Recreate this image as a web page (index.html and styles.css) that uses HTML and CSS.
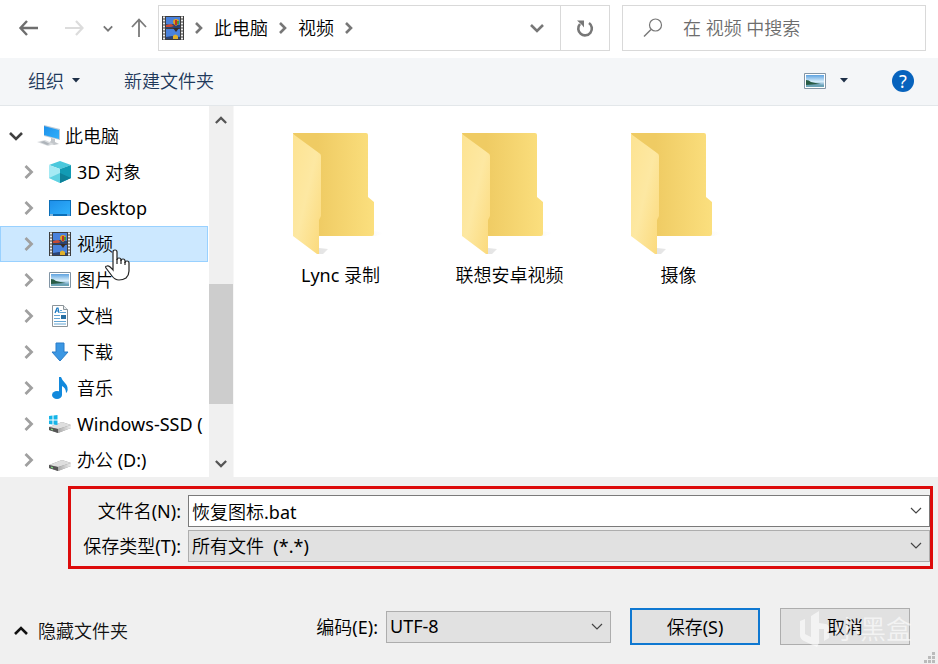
FILE: index.html
```html
<!DOCTYPE html>
<html lang="zh-CN">
<head>
  <meta charset="UTF-8" />
  <meta name="viewport" content="width=device-width, initial-scale=1" />
  <title>另存为</title>
  <link rel="stylesheet" href="styles.css">
</head>
<body>

  <!-- shared icons -->
  <svg class="sprite" aria-hidden="true">
    <defs>
      <linearGradient id="gBack" x1="0" x2="1"><stop offset="0.3" stop-color="#efcb63"/><stop offset="1" stop-color="#fbdf7e"/></linearGradient>
      <linearGradient id="gFront" x1="0" y1="0" x2="1" y2="1"><stop offset="0" stop-color="#fde392"/><stop offset="0.5" stop-color="#fde8a2"/><stop offset="1" stop-color="#fbd97a"/></linearGradient>
      <linearGradient id="gShade" x1="0" x2="1"><stop offset="0" stop-color="#bbb"/><stop offset="1" stop-color="#fff"/></linearGradient>
      <linearGradient id="gSky" x1="0" y1="0" x2="0" y2="1"><stop offset="0" stop-color="#5fa3e0"/><stop offset="0.55" stop-color="#d8eefa"/><stop offset="1" stop-color="#3b7fa8"/></linearGradient>
      <linearGradient id="gScreen" x1="0" y1="0" x2="1" y2="1"><stop offset="0" stop-color="#1e90ea"/><stop offset="1" stop-color="#2fb0fb"/></linearGradient>
      <linearGradient id="gDisk" x1="0" x2="1"><stop offset="0" stop-color="#a9a9a9"/><stop offset="1" stop-color="#ececec"/></linearGradient>
    </defs>
    <symbol id="chevron-right" viewBox="0 0 10 12"><path d="M2 1l5 5-5 5" fill="none" stroke="currentColor" stroke-width="2.6"/></symbol>
    <symbol id="chevron-item" viewBox="0 0 10 14"><path d="M1.500 1l6 6-6 6" fill="none" stroke="currentColor" stroke-width="2.8"/></symbol>
    <symbol id="chevron-down" viewBox="0 0 14 10"><path d="M1 2l6 6 6-6" fill="none" stroke="currentColor" stroke-width="2.6"/></symbol>
    <symbol id="chevron-up" viewBox="0 0 14 10"><path d="M1 8l6-6 6 6" fill="none" stroke="currentColor" stroke-width="2.6"/></symbol>
    <symbol id="thin-down" viewBox="0 0 12 8"><path d="M1 1l5 5 5-5" fill="none" stroke="#444" stroke-width="1.2"/></symbol>
    <symbol id="triangle" viewBox="0 0 8 5"><path d="M0 0h8L4 4.500z" fill="#1d2f47"/></symbol>
    <symbol id="film" viewBox="0 0 22 24">
      <path d="M0 0h22v24H0z" fill="#3d3d3d"/>
      <path d="M4 1h14v10H4zM4 13h14v10H4z" fill="#4a82dc"/>
      <path d="M4 8l4 1 3-1 7 1v3H4zM4 21l6-1 8 1v2H4z" fill="#2b4374"/>
      <path d="M1 1.500h2M1 4.500h2M1 7.500h2M1 10.500h2M1 13.500h2M1 16.500h2M1 19.500h2M1 22.500h2M19 1.500h2M19 4.500h2M19 7.500h2M19 10.500h2M19 13.500h2M19 16.500h2M19 19.500h2M19 22.500h2" stroke="#eee" stroke-width="1.800"/>
      <path d="M11 6q0-3 3-3t3 3q0 2-3 4-3-2-3-4z" fill="#e2a31d"/>
      <path d="M13 4h2v5h-2z" fill="#c03325"/>
      <path d="M15 5h2v3h-2z" fill="#4d9a31"/>
      <path d="M4 9l5-1 3 2-3 1H4z" fill="#c94b35"/>
      <path d="M11 12h6l-3 4z" fill="#3a2c24"/>
      <path d="M11 20q2-3 5 0v3h-5z" fill="#e0b02b"/>
    </symbol>
    <symbol id="pc" viewBox="0 0 24 22">
      <path d="M7 0l16 4v11L7 11z" fill="#b9cad8"/>
      <path d="M7 1l15 4v9L7 10z" fill="url(#gScreen)"/>
      <path d="M14 13l4 1v3l4 2-5 1-6-2 3-2z" fill="#c2c6ca"/>
      <path d="M0 17l8-2 9 4-6 2z" fill="#d8dbde"/>
      <path d="M3 17l4-1 6 3-3 1z" fill="#aeb4ba"/>
    </symbol>
    <symbol id="cube" viewBox="0 0 22 22">
      <path d="M11 0l11 4-11 4L0 4z" fill="#4ac8dc"/>
      <path d="M0 4l11 4v14L0 17z" fill="#a5eaf4"/>
      <path d="M11 8l11-4v13l-11 5z" fill="#129bb4"/>
      <path d="M0 17l11-5v10z" fill="#61d2e2"/>
      <path d="M11 12l11 5-11 5z" fill="#0d8199"/>
    </symbol>
    <symbol id="desktop" viewBox="0 0 22 16">
      <path d="M0 0h22v16H0z" fill="#0b6fb8"/>
      <path d="M1 1h20v13H1z" fill="url(#gScreen)"/>
      <path d="M1 15h3" stroke="#fff"/><path d="M18 15h3" stroke="#9cf"/>
    </symbol>
    <symbol id="picture" viewBox="0 0 22 16">
      <path d="M0.500 0.500h21v15h-21z" fill="#fff" stroke="#8295a5"/>
      <path d="M2 2h18v12H2z" fill="url(#gSky)"/>
      <path d="M2 7q3 0 5 2 4 1 10 2l-15 1z" fill="#285c45"/>
      <path d="M2 12h18v2H2z" fill="#6aa3b5"/>
    </symbol>
    <symbol id="document" viewBox="0 0 18 22">
      <path d="M1.500 0.500h11l4 4v17h-15z" fill="#fff" stroke="#8c9499"/>
      <path d="M12.500 0.500v4h4" fill="#e7ecef" stroke="#8c9499"/>
      <path d="M4 8l2-5h1l1 5M5 6h3" fill="none" stroke="#1676bf" stroke-width="1.200"/>
      <path d="M9 5.500h2M9 7.500h6M3 10.500h6M3 13.500h6M3 16.500h12M3 19h12" stroke="#65a6d4" stroke-width="1.200"/>
      <path d="M10 10h5v4h-5z" fill="#276fa3"/>
    </symbol>
    <symbol id="download" viewBox="0 0 18 20"><path d="M5 1h8v9h4l-8 9-8-9h4z" fill="#3b97e3" stroke="#2a7dc9"/></symbol>
    <symbol id="music" viewBox="0 0 16 22">
      <ellipse cx="5" cy="18" rx="5" ry="4" fill="#1289dc"/>
      <path d="M7 0h2q1 3 4 6 4 4 2 9l-1 1q0-5-4-7v9H7z" fill="#1289dc"/>
    </symbol>
    <symbol id="drive" viewBox="0 0 22 12">
      <path d="M0 6l13-5 9 3v3L9 12 0 9z" fill="#8d8d8d"/>
      <path d="M0 6l13-5 9 3L9 8z" fill="#dedede"/>
      <path d="M0 6l9 2v4L0 9z" fill="#555"/>
      <path d="M9 8l13-4v3L9 12z" fill="url(#gDisk)"/>
      <path d="M2 8l2 1" stroke="#8f8"/>
    </symbol>
    <symbol id="windrive" viewBox="0 0 22 18">
      <use href="#drive" x="0" y="6" width="22" height="12"/>
      <path d="M0 1l3.500-0.500v4H0zM4.500 0.400l4-0.400v4.500h-4zM0 5.500h3.500v4L0 9zM4.500 5.500h4V10l-4-0.500z" fill="#15b4e8"/>
    </symbol>
    <symbol id="folder" viewBox="0 0 96 124">
      <path d="M80 103V98l11 2-8 3zM26 121v-6l9 1-5 5z" fill="url(#gShade)" opacity="0.4"/>
      <path d="M0 0h73q2 0 2 2v62l6 5v32q0 2-2 2H20z" fill="url(#gBack)"/>
      <path d="M0 1l26 19q2 1 2 3v60l-2 4v34h-2L0 103z" fill="url(#gFront)"/>
    </symbol>
  </svg>

  <div class="dialog">
    <header class="nav">
      <button class="icon-btn back" aria-label="后退"><svg width="20" height="16" viewBox="0 0 20 16"><path d="M20 8H3M9 1L2.500 8 9 15" fill="none" stroke="#6e6e6e" stroke-width="2.400"/></svg></button>
      <button class="icon-btn forward" aria-label="前进"><svg width="20" height="16" viewBox="0 0 20 16"><path d="M1 8h17M12 1l6.500 7-6.500 7" fill="none" stroke="#dcdcdc" stroke-width="2.200"/></svg></button>
      <button class="icon-btn recent" aria-label="最近浏览的位置"><svg width="10" height="7"><use href="#chevron-down"/></svg></button>
      <button class="icon-btn up" aria-label="上移"><svg width="16" height="20" viewBox="0 0 16 20"><path d="M8 19V2M1 9l7-7.500L15 9" fill="none" stroke="#7a7a7a" stroke-width="1.800"/></svg></button>

      <div class="address">
        <svg width="22" height="24"><use href="#film"/></svg>
        <svg class="sep" width="10" height="12"><use href="#chevron-right"/></svg>
        <a href="#">此电脑</a>
        <svg class="sep" width="10" height="12"><use href="#chevron-right"/></svg>
        <a href="#">视频</a>
        <svg class="sep" width="10" height="12"><use href="#chevron-right"/></svg>
        <button class="icon-btn history" aria-label="以前的位置"><svg width="14" height="10"><use href="#chevron-down"/></svg></button>
        <button class="icon-btn refresh" aria-label="刷新"><svg width="18" height="18" viewBox="0 0 18 18"><path d="M13 4A6.800 6.800 0 1 1 4 5" fill="none" stroke="#777" stroke-width="2.600"/><path d="M1 1.500h7v7L6 6z" fill="#777"/></svg></button>
      </div>

      <label class="search">
        <svg width="20" height="20" viewBox="0 0 20 20"><circle cx="12.500" cy="7" r="6" fill="none" stroke="#777" stroke-width="1.200"/><path d="M8 11.500L1 18.500" stroke="#777" stroke-width="1.400"/></svg>
        <input type="text" placeholder="在 视频 中搜索" aria-label="搜索">
      </label>
    </header>

    <div class="toolbar">
      <button class="tool">组织 <svg width="8" height="5"><use href="#triangle"/></svg></button>
      <button class="tool">新建文件夹</button>
      <button class="tool view" aria-label="更改视图"><svg width="22" height="16"><use href="#picture"/></svg><svg width="8" height="5"><use href="#triangle"/></svg></button>
      <button class="help" aria-label="帮助">?</button>
    </div>

    <main class="main">
      <nav class="tree">
        <ul>
          <li class="root"><svg class="arrow" width="14" height="10"><use href="#chevron-down"/></svg><svg class="ico" width="24" height="22"><use href="#pc"/></svg><a href="#">此电脑</a></li>
          <li><svg class="arrow" width="10" height="14"><use href="#chevron-item"/></svg><svg class="ico" width="22" height="22"><use href="#cube"/></svg><a href="#">3D 对象</a></li>
          <li><svg class="arrow" width="10" height="14"><use href="#chevron-item"/></svg><svg class="ico" width="22" height="16"><use href="#desktop"/></svg><a href="#">Desktop</a></li>
          <li class="selected">
            <svg class="arrow" width="10" height="14"><use href="#chevron-item"/></svg><svg class="ico" width="22" height="24"><use href="#film"/></svg><a href="#">视频</a>
            <svg class="cursor" width="26" height="32" viewBox="0 0 26 32"><path d="M8 19V3q0-2 2-2t2 2v8q0-2 2-2t2 2v1q0-2 2-2t2 2v2q0-2 2-2t2 2v8q0 4-3 7-3 2-7 2-4 0-7-4L1 19q-1-2 1-2 2-1 6 4z" fill="#fff" stroke="#222" stroke-width="1.200"/><path d="M12 10v5M16 11v4M20 13v3" stroke="#222" stroke-width="1.200"/></svg>
          </li>
          <li><svg class="arrow" width="10" height="14"><use href="#chevron-item"/></svg><svg class="ico" width="22" height="16"><use href="#picture"/></svg><a href="#">图片</a></li>
          <li><svg class="arrow" width="10" height="14"><use href="#chevron-item"/></svg><svg class="ico" width="22" height="22"><use href="#document"/></svg><a href="#">文档</a></li>
          <li><svg class="arrow" width="10" height="14"><use href="#chevron-item"/></svg><svg class="ico" width="22" height="20"><use href="#download"/></svg><a href="#">下载</a></li>
          <li><svg class="arrow" width="10" height="14"><use href="#chevron-item"/></svg><svg class="ico" width="22" height="22"><use href="#music"/></svg><a href="#">音乐</a></li>
          <li><svg class="arrow" width="10" height="14"><use href="#chevron-item"/></svg><svg class="ico" width="22" height="18"><use href="#windrive"/></svg><a href="#">Windows-SSD (</a></li>
          <li><svg class="arrow" width="10" height="14"><use href="#chevron-item"/></svg><svg class="ico low" width="22" height="12"><use href="#drive"/></svg><a href="#">办公 (D:)</a></li>
        </ul>
      </nav>
      <div class="scrollbar">
        <button class="icon-btn" aria-label="向上滚动"><svg width="12" height="9"><use href="#chevron-up"/></svg></button>
        <div class="track"><div class="thumb"></div></div>
        <button class="icon-btn" aria-label="向下滚动"><svg width="12" height="9"><use href="#chevron-down"/></svg></button>
      </div>
      <section class="files">
        <a class="file" href="#"><svg width="96" height="124"><use href="#folder"/></svg>Lync 录制</a>
        <a class="file" href="#"><svg width="96" height="124"><use href="#folder"/></svg>联想安卓视频</a>
        <a class="file" href="#"><svg width="96" height="124"><use href="#folder"/></svg>摄像</a>
      </section>
    </main>

    <form class="bottom">
      <div class="fields">
        <label for="name">文件名(N):</label>
        <div class="combo white">
          <input id="name" type="text" value="恢复图标.bat">
          <svg width="12" height="8"><use href="#thin-down"/></svg>
        </div>
        <label for="type">保存类型(T):</label>
        <div class="combo">
          <select id="type"><option>所有文件&nbsp; (*.*)</option></select>
          <svg width="12" height="8"><use href="#thin-down"/></svg>
        </div>
      </div>

      <div class="actions">
        <button class="hide-folders" type="button"><svg width="14" height="10"><use href="#chevron-up"/></svg>隐藏文件夹</button>
        <label for="encoding">编码(E):</label>
        <div class="combo encoding">
          <select id="encoding"><option>UTF-8</option></select>
          <svg width="12" height="8"><use href="#thin-down"/></svg>
        </div>
        <button class="btn primary" type="button">保存(S)</button>
        <div class="cancel">
          <button class="btn" type="button">取消</button>
          <div class="watermark">
            <svg width="30" height="36" viewBox="0 0 30 36"><path d="M0 10l5-2v15l6 3V5l8-5v12l7 1q3 1 3 4v10l-5 3V18h-5v14l-2 4-13-6q-4-2-4-6z" fill="#fff"/></svg>
            <span>小黑盒</span>
          </div>
        </div>
      </div>
      <svg class="grip" width="11" height="11" viewBox="0 0 11 11"><path d="M8 0h3v3H8zM4 4h3v3H4zM8 4h3v3H8zM0 8h3v3H0zM4 8h3v3H4zM8 8h3v3H8z" fill="#bbb"/></svg>
    </form>
  </div>

</body>
</html>
```
FILE: styles.css
```css
* { box-sizing: border-box; margin: 0; padding: 0; }

body {
  font-family: "Noto Sans", "Noto Sans CJK SC DemiLight", "Noto Sans CJK SC", sans-serif;
  font-size: 18px;
  line-height: 24px;
  color: #000;
  background: #fff;
}

a { color: inherit; text-decoration: none; }
ul { list-style: none; }
svg { flex: none; display: block; }
button, input, select { font: inherit; color: inherit; }
button { background: none; border: none; }
.sprite { position: absolute; width: 0; height: 0; }

.dialog {
  display: flex;
  flex-direction: column;
  height: 100vh;
}

/* navigation bar */
.nav {
  display: flex;
  align-items: center;
  height: 58px;
  padding: 0 12px 2px 18px;
}
.icon-btn {
  display: flex;
  align-items: center;
  justify-content: center;
  flex: none;
  color: #777;
}
.back, .forward { width: 20px; margin-right: 26px; }
.forward { margin-right: 18px; }
.recent { width: 12px; margin-right: 16px; }
.up { width: 18px; margin-right: 10px; }

.address {
  flex: 1;
  display: flex;
  align-items: center;
  gap: 10px;
  height: 46px;
  padding-left: 3px;
  border: 1px solid #d9d9d9;
}
.sep { color: #777; }
.history { margin-left: auto; width: 26px; }
.refresh {
  width: 49px;
  align-self: stretch;
  border-left: 1px solid #d9d9d9;
}

.search {
  width: 304px;
  display: flex;
  align-items: center;
  gap: 20px;
  height: 46px;
  margin-left: 12px;
  padding-left: 20px;
  border: 1px solid #d9d9d9;
}
.search input {
  flex: 1;
  min-width: 0;
  border: none;
  outline: none;
}
.search input::placeholder { color: #6d6d6d; opacity: 1; }

/* toolbar */
.toolbar {
  display: flex;
  align-items: center;
  height: 48px;
  padding: 0 24px 2px 28px;
  background: #f4f6f8;
  border-bottom: 1px solid #e3e7ea;
  color: #1e395b;
}
.tool {
  display: flex;
  align-items: center;
  gap: 8px;
  margin-right: 44px;
}
.view { margin-left: auto; gap: 14px; }
.help {
  width: 22px;
  height: 22px;
  border-radius: 50%;
  background: #0763bd;
  color: #fff;
  line-height: 22px;
}

/* folder tree and files */
.main {
  flex: 1;
  display: flex;
  min-height: 0;
}
.tree {
  width: 209px;
  padding: 12px 1px 0 0;
  overflow: hidden;
}
.tree li {
  position: relative;
  display: flex;
  align-items: center;
  height: 36px;
  padding-left: 23px;
  border: 1px solid transparent;
  white-space: nowrap;
}
.tree .root { padding-left: 8px; }
.tree .arrow { color: #a0a0a0; margin-right: 15px; }
.tree .root .arrow { color: #404040; margin-right: 14px; }
.tree .ico { margin-right: 6px; }
.tree .root .ico { margin-right: 4px; }
.tree .low { align-self: flex-end; margin-bottom: 6px; }
.tree .selected {
  background: #cce8ff;
  border-color: #99d1ff;
  z-index: 1;
}
.cursor {
  position: absolute;
  left: 104px;
  top: 22px;
}

.scrollbar {
  display: flex;
  flex-direction: column;
  width: 25px;
  background: #f0f0f0;
  border-right: 1px solid #f7f7f7;
}
.scrollbar .icon-btn { height: 28px; color: #555; }
.track {
  flex: 1;
  display: flex;
  flex-direction: column;
}
.track::before { content: ""; flex: 10; }
.track::after { content: ""; flex: 3; }
.thumb { flex: 8; background: #cdcdcd; }

.files {
  flex: 1;
  display: flex;
  flex-wrap: wrap;
  align-content: flex-start;
  padding: 27px 0 0 22px;
}
.file {
  display: flex;
  flex-direction: column;
  align-items: center;
  gap: 6px;
  width: 169px;
}

/* file name, type and buttons */
.bottom {
  position: relative;
  padding: 9px 5px 19px 13px;
  background: #f0f0f0;
}
.fields {
  display: grid;
  grid-template-columns: 110px 1fr;
  gap: 3px 7px;
  align-items: center;
  margin-left: 55px;
  padding: 6px 0 4px;
  border: 3px solid #dd0b0b;
}
.fields label { text-align: right; white-space: nowrap; }

.combo {
  display: grid;
  align-items: center;
  height: 32px;
  background: #e1e1e1;
  border: 1px solid #adadad;
}
.combo > * { grid-area: 1 / 1; }
.combo svg {
  justify-self: end;
  margin-right: 7px;
  pointer-events: none;
}
.combo input, .combo select {
  width: 100%;
  height: 30px;
  padding: 0 24px 1px 3px;
  border: none;
  outline: none;
  background: transparent;
  appearance: none;
}
.white { background: #fff; border-color: #7a7a7a; }

.actions {
  display: flex;
  align-items: center;
  margin-top: 39px;
  padding-right: 23px;
}
.hide-folders {
  display: flex;
  align-items: center;
  gap: 10px;
  margin-right: auto;
  padding: 8px 0 0 1px;
  color: #111;
}
.encoding {
  width: 225px;
  margin: 0 19px 0 8px;
}
.btn {
  width: 130px;
  height: 37px;
  background: #e1e1e1;
  border: 1px solid #adadad;
}
.primary { border: 2px solid #0f78d1; }
.cancel { position: relative; margin-left: 20px; }
.watermark {
  position: absolute;
  top: 3px;
  right: -2px;
  display: flex;
  align-items: center;
  gap: 4px;
  font-size: 26px;
  font-weight: 500;
  color: #fff;
  opacity: 0.6;
  pointer-events: none;
}
.grip {
  position: absolute;
  right: 3px;
  bottom: 1px;
}
```
